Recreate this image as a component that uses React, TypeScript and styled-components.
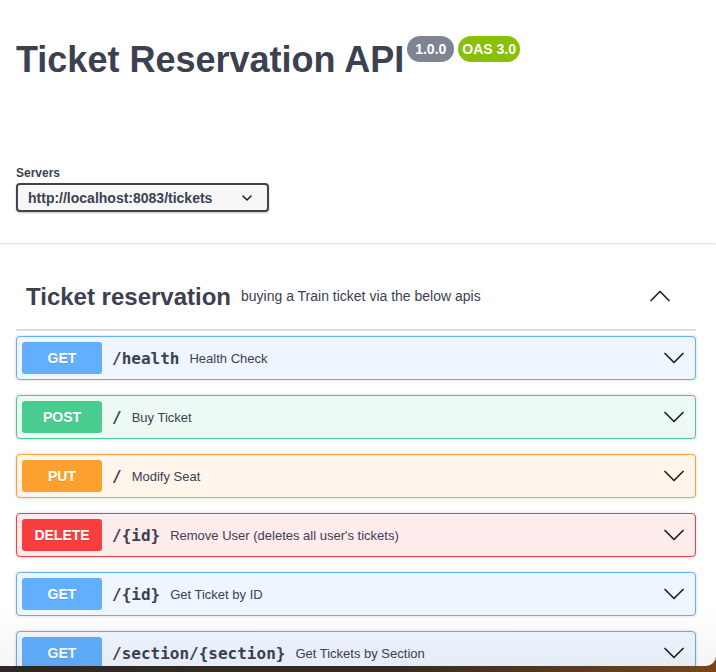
import React from 'react';
import styled, { createGlobalStyle } from 'styled-components';

const GlobalStyle = createGlobalStyle`
  html, body { margin: 0; padding: 0; }
  body {
    background: linear-gradient(90deg, #2d2825 0%, #352a22 55%, #7a4419 100%);
    font-family: "Liberation Sans", Arial, sans-serif;
    color: #3b4151;
    overflow: hidden;
  }
`;

const Window = styled.div`
  position: relative;
  height: 666px;
  overflow: hidden;
  background: #fff;
  border-bottom-right-radius: 10px;
`;

const Info = styled.header`
  box-sizing: border-box;
  height: 135px;
  padding: 36px 20px 0 16px;
`;

const TitleRow = styled.div`
  display: flex;
  align-items: flex-start;
`;

const Title = styled.h2`
  margin: 6px 0 0;
  font-size: 36px;
  line-height: 36px;
  font-weight: 700;
  color: #3b4151;
`;

const Badge = styled.span<{ $bg: string; $pad: number; $ml: number }>`
  margin-left: ${(p) => p.$ml}px;
  height: 26px;
  line-height: 26px;
  padding: 0 ${(p) => p.$pad}px;
  border-radius: 13px;
  background: ${(p) => p.$bg};
  color: #fff;
  font-size: 14px;
  font-weight: 700;
`;

const Scheme = styled.section`
  position: relative;
  z-index: 1;
  background: #fff;
  box-shadow: 0 1px 2px 0 rgba(0, 0, 0, 0.15);
  padding: 30px 20px 31px 16px;
`;

const Label = styled.div`
  font-size: 12px;
  line-height: 17px;
  font-weight: 700;
  color: #3b4151;
  margin-bottom: 1px;
`;

const Select = styled.div`
  display: flex;
  align-items: center;
  justify-content: space-between;
  box-sizing: border-box;
  width: 253px;
  height: 29px;
  padding: 0 15px 0 10px;
  border: 2px solid #41444e;
  border-radius: 4px;
  background: #f7f7f7;
  box-shadow: 0 1px 2px 0 rgba(0, 0, 0, 0.25);
  font-size: 14px;
  font-weight: 700;
  color: #3b4151;
`;

const Content = styled.main`
  padding: 20px 20px 0 16px;
`;

const TagHeader = styled.div`
  display: flex;
  align-items: center;
  height: 66px;
  padding: 0 26px 0 10px;
  border-bottom: 2px solid #dcdde0;
  margin-bottom: 5px;
`;

const TagTitle = styled.h3`
  margin: 0;
  font-size: 24px;
  line-height: 29px;
  font-weight: 700;
  color: #3b4151;
`;

const TagDesc = styled.small`
  flex: 1;
  padding: 0 10px;
  font-size: 14px;
  color: #3b4151;
`;

const Opblock = styled.div<{ $c: string; $bg: string }>`
  display: flex;
  align-items: center;
  box-sizing: border-box;
  height: 44px;
  padding: 0 5px;
  margin-bottom: 15px;
  border: 1px solid ${(p) => p.$c};
  border-radius: 4px;
  background: ${(p) => p.$bg};
  box-shadow: 0 0 3px rgba(0, 0, 0, 0.19);
`;

const Method = styled.span<{ $c: string }>`
  flex: none;
  width: 80px;
  height: 32px;
  line-height: 32px;
  text-align: center;
  border-radius: 3px;
  background: ${(p) => p.$c};
  color: #fff;
  font-size: 14px;
  font-weight: 700;
  text-shadow: 0 1px 0 rgba(0, 0, 0, 0.1);
`;

const Path = styled.span`
  padding: 0 10px;
  font-family: "DejaVu Sans Mono", "Liberation Mono", monospace;
  font-size: 16px;
  font-weight: 700;
  color: #3b4151;
  white-space: nowrap;
`;

const Desc = styled.span`
  flex: 1;
  font-size: 13px;
  color: #3b4151;
`;

const Arrow = styled.svg<{ $mr: number }>`
  flex: none;
  margin-right: ${(p) => p.$mr}px;
`;

const Shade = styled.div`
  position: absolute;
  left: 0;
  right: 0;
  bottom: 0;
  height: 60px;
  pointer-events: none;
  background: linear-gradient(rgba(0, 0, 0, 0), rgba(0, 0, 0, 0.04));
`;

const Chevron = ({ up, mr }: { up?: boolean; mr: number }) => (
  <Arrow $mr={mr} width="20" height="20" viewBox="0 0 20 20">
    <polyline
      points={up ? '1,14.5 10,5.5 19,14.5' : '1,5.5 10,14.5 19,5.5'}
      fill="none"
      stroke="#1f2229"
      strokeWidth="1.7"
      strokeLinecap="round"
      strokeLinejoin="round"
    />
  </Arrow>
);

const METHODS: Record<string, { c: string; bg: string }> = {
  GET: { c: '#61affe', bg: '#eff6ff' },
  POST: { c: '#49cc90', bg: '#edfaf4' },
  PUT: { c: '#fca130', bg: '#fff5ea' },
  DELETE: { c: '#f93e3e', bg: '#feebeb' },
};

const OPS = [
  { m: 'GET', path: '/health', desc: 'Health Check' },
  { m: 'POST', path: '/', desc: 'Buy Ticket' },
  { m: 'PUT', path: '/', desc: 'Modify Seat' },
  { m: 'DELETE', path: '/{id}', desc: "Remove User (deletes all user's tickets)" },
  { m: 'GET', path: '/{id}', desc: 'Get Ticket by ID' },
  { m: 'GET', path: '/section/{section}', desc: 'Get Tickets by Section' },
];

export default function App() {
  return (
    <>
      <GlobalStyle />
      <Window>
        <Info>
          <TitleRow>
            <Title>Ticket Reservation API</Title>
            <Badge $bg="#7d8492" $pad={8} $ml={3}>1.0.0</Badge>
            <Badge $bg="#89bf04" $pad={4} $ml={4}>OAS 3.0</Badge>
          </TitleRow>
        </Info>
        <Scheme>
          <Label>Servers</Label>
          <Select>
            <span>http://localhost:8083/tickets</span>
            <svg width="10" height="6" viewBox="0 0 10 6">
              <polyline points="1,1 5,5 9,1" fill="none" stroke="#1f2229" strokeWidth="1.6" strokeLinecap="round" strokeLinejoin="round" />
            </svg>
          </Select>
        </Scheme>
        <Content>
          <TagHeader>
            <TagTitle>Ticket reservation</TagTitle>
            <TagDesc>buying a Train ticket via the below apis</TagDesc>
            <Chevron up mr={0} />
          </TagHeader>
          {OPS.map((op, i) => {
            const col = METHODS[op.m];
            return (
              <Opblock key={i} $c={col.c} $bg={col.bg}>
                <Method $c={col.c}>{op.m}</Method>
                <Path>{op.path}</Path>
                <Desc>{op.desc}</Desc>
                <Chevron mr={6} />
              </Opblock>
            );
          })}
        </Content>
        <Shade />
      </Window>
    </>
  );
}
